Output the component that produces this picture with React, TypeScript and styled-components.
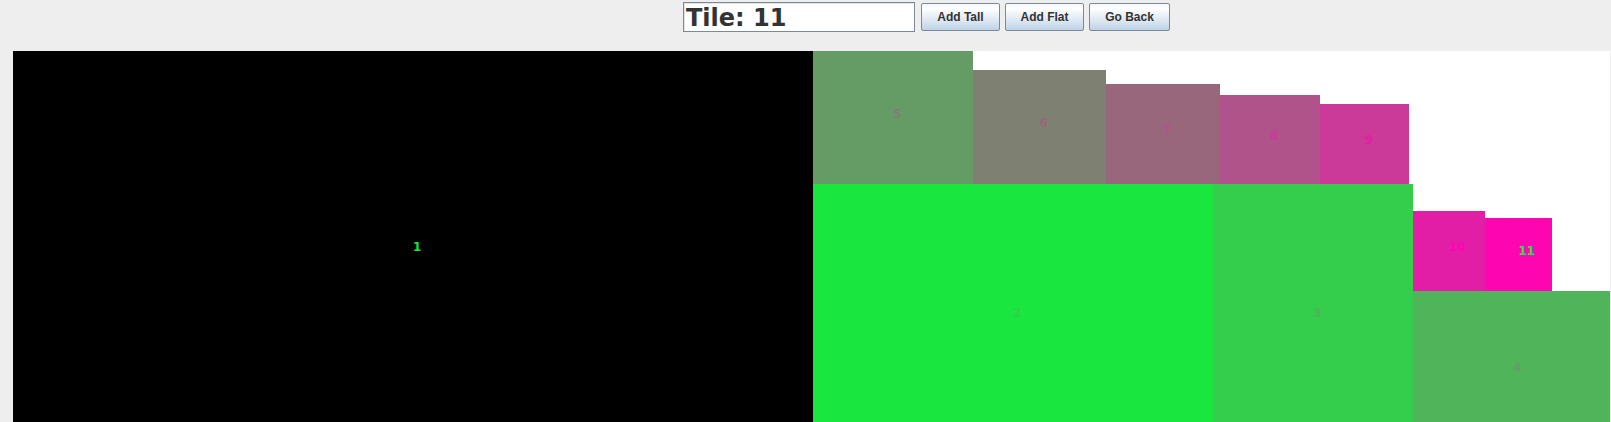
import React from "react";
import styled, { createGlobalStyle } from "styled-components";

const GlobalStyle = createGlobalStyle`
  html, body {
    margin: 0;
    padding: 0;
    background: #eeeeee;
    overflow: hidden;
  }
  body {
    font-family: "DejaVu Sans", "Liberation Sans", sans-serif;
  }
`;

const Page = styled.div`
  width: 1611px;
  height: 422px;
  display: flex;
  flex-direction: column;
  background: #eeeeee;
  overflow: hidden;
`;

const TopBar = styled.div`
  height: 51px;
  box-sizing: border-box;
  padding: 2px 0 0 683px;
  display: flex;
  align-items: flex-start;
`;

const Controls = styled.div`
  height: 30px;
  display: flex;
  align-items: center;
  gap: 5px;
`;

const TextField = styled.div`
  width: 232px;
  height: 30px;
  box-sizing: border-box;
  margin-right: 1px;
  border: 1px solid #7a8a99;
  box-shadow: inset 1px 1px 0 #e3e3e3;
  background: #ffffff;
  display: flex;
  align-items: center;
  padding-left: 2px;
  font-family: "DejaVu Sans", sans-serif;
  font-weight: bold;
  font-size: 24px;
  line-height: 1;
  color: #333333;
  white-space: nowrap;
  padding-top: 1px;
`;

const Button = styled.button<{ $w: number }>`
  width: ${(p) => p.$w}px;
  height: 28px;
  box-sizing: border-box;
  margin: 0;
  padding: 0;
  border: 1px solid #7a8a99;
  border-radius: 2px;
  background: linear-gradient(
    to bottom,
    #f4f8fc 0%,
    #ffffff 18%,
    #e9f0f7 45%,
    #d3e1ef 75%,
    #bfd2e6 100%
  );
  font-family: "Liberation Sans", Arial, sans-serif;
  font-weight: bold;
  font-size: 12px;
  color: #333333;
  display: flex;
  align-items: center;
  justify-content: center;
  cursor: default;
`;

const Canvas = styled.div`
  position: relative;
  margin-left: 13px;
  width: 1597px;
  flex: 1;
  background: #ffffff;
  overflow: hidden;
`;

const Tile = styled.div<{ $bg: string }>`
  position: absolute;
  background: ${(p) => p.$bg};
`;

const Label = styled.span<{ $fg: string }>`
  position: absolute;
  left: 50%;
  bottom: 50%;
  margin-bottom: -2px;
  font-family: "DejaVu Sans", sans-serif;
  font-weight: bold;
  font-size: 12px;
  line-height: 1;
  color: ${(p) => p.$fg};
  white-space: nowrap;
`;

type TileData = {
  n: number;
  x: number;
  y: number;
  w: number;
  h: number;
  bg: string;
  fg: string;
};

const C = {
  1: "#000000",
  2: "#1ae640",
  3: "#34cd4c",
  4: "#4fb45a",
  5: "#659c66",
  6: "#7e8172",
  7: "#98677b",
  8: "#b0538b",
  9: "#cb3a98",
  10: "#e11ea5",
  11: "#fe05b2",
};

const tiles: TileData[] = [
  { n: 1, x: 0, y: 0, w: 800, h: 400, bg: C[1], fg: C[2] },
  { n: 5, x: 800, y: 0, w: 160, h: 133, bg: C[5], fg: C[6] },
  { n: 6, x: 960, y: 19, w: 133, h: 114, bg: C[6], fg: C[7] },
  { n: 7, x: 1093, y: 33, w: 114, h: 100, bg: C[7], fg: C[8] },
  { n: 8, x: 1207, y: 44, w: 100, h: 89, bg: C[8], fg: C[9] },
  { n: 9, x: 1307, y: 53, w: 89, h: 80, bg: C[9], fg: C[10] },
  { n: 2, x: 800, y: 133, w: 400, h: 266, bg: C[2], fg: C[3] },
  { n: 3, x: 1200, y: 133, w: 200, h: 266, bg: C[3], fg: C[4] },
  { n: 10, x: 1400, y: 160, w: 72, h: 80, bg: C[10], fg: C[11] },
  { n: 11, x: 1472, y: 167, w: 67, h: 73, bg: C[11], fg: C[2] },
  { n: 4, x: 1400, y: 240, w: 200, h: 162, bg: C[4], fg: C[5] },
];

export default function App() {
  return (
    <Page>
      <GlobalStyle />
      <TopBar>
        <Controls>
          <TextField>Tile: 11</TextField>
          <Button $w={79}>Add Tall</Button>
          <Button $w={79}>Add Flat</Button>
          <Button $w={81}>Go Back</Button>
        </Controls>
      </TopBar>
      <Canvas>
        {tiles.map((t) => (
          <Tile
            key={t.n}
            $bg={t.bg}
            style={{ left: t.x, top: t.y, width: t.w, height: t.h }}
          >
            <Label $fg={t.fg}>{t.n}</Label>
          </Tile>
        ))}
      </Canvas>
    </Page>
  );
}
